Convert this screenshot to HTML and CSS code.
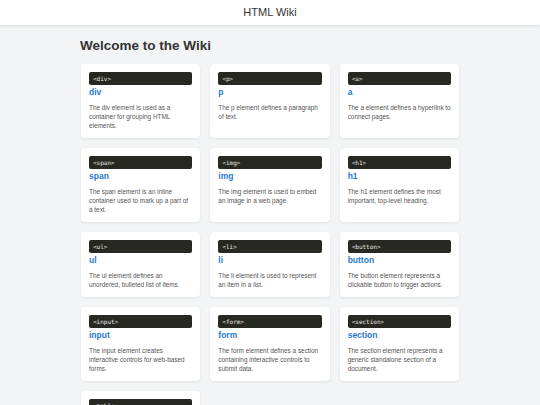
FILE: index.html
```html
<!DOCTYPE html>
<html lang="en">
<head>
  <meta charset="UTF-8">
  <meta name="viewport" content="width=device-width, initial-scale=1.0">
  <title>HTML Wiki</title>
  <link rel="stylesheet" href="styles.css">
</head>
<body>
  <header class="topbar">HTML Wiki</header>

  <main class="wiki">
    <h1>Welcome to the Wiki</h1>

    <div class="cards">
      <div class="card">
        <code class="tag">&lt;div&gt;</code>
        <h2>div</h2>
        <p>The div element is used as a container for grouping HTML elements.</p>
      </div>
      <div class="card">
        <code class="tag">&lt;p&gt;</code>
        <h2>p</h2>
        <p>The p element defines a paragraph of text.</p>
      </div>
      <div class="card">
        <code class="tag">&lt;a&gt;</code>
        <h2>a</h2>
        <p>The a element defines a hyperlink to connect pages.</p>
      </div>
      <div class="card">
        <code class="tag">&lt;span&gt;</code>
        <h2>span</h2>
        <p>The span element is an inline container used to mark up a part of a text.</p>
      </div>
      <div class="card">
        <code class="tag">&lt;img&gt;</code>
        <h2>img</h2>
        <p>The img element is used to embed an image in a web page.</p>
      </div>
      <div class="card">
        <code class="tag">&lt;h1&gt;</code>
        <h2>h1</h2>
        <p>The h1 element defines the most important, top-level heading.</p>
      </div>
      <div class="card">
        <code class="tag">&lt;ul&gt;</code>
        <h2>ul</h2>
        <p>The ul element defines an unordered, bulleted list of items.</p>
      </div>
      <div class="card">
        <code class="tag">&lt;li&gt;</code>
        <h2>li</h2>
        <p>The li element is used to represent an item in a list.</p>
      </div>
      <div class="card">
        <code class="tag">&lt;button&gt;</code>
        <h2>button</h2>
        <p>The button element represents a clickable button to trigger actions.</p>
      </div>
      <div class="card">
        <code class="tag">&lt;input&gt;</code>
        <h2>input</h2>
        <p>The input element creates interactive controls for web-based forms.</p>
      </div>
      <div class="card">
        <code class="tag">&lt;form&gt;</code>
        <h2>form</h2>
        <p>The form element defines a section containing interactive controls to submit data.</p>
      </div>
      <div class="card">
        <code class="tag">&lt;section&gt;</code>
        <h2>section</h2>
        <p>The section element represents a generic standalone section of a document.</p>
      </div>
      <div class="card">
        <code class="tag">&lt;table&gt;</code>
        <h2>table</h2>
        <p>The table element represents data arranged in rows and columns.</p>
      </div>
    </div>
  </main>
</body>
</html>
```

FILE: styles.css
```css
body {
  margin: 0;
  background-color: #f3f4f6;
  color: #333;
  font-family: "Liberation Sans", Arial, sans-serif;
}
.topbar {
  height: 25px;
  line-height: 25px;
  background-color: #fff;
  text-align: center;
  font-size: 11px;
  color: #333;
  box-shadow: 0 1px 3px rgba(0, 0, 0, 0.1);
}
.wiki {
  max-width: 378px;
  margin: 0 auto;
  padding: 12px 0;
}
.wiki h1 {
  margin: 0 0 10px -1px;
  font-size: 13.5px;
  line-height: 17px;
  color: #333;
}
.cards {
  display: grid;
  grid-template-columns: repeat(3, 1fr);
  gap: 10px;
}
.card {
  background-color: #fff;
  border-radius: 4px;
  padding: 8px;
  box-shadow: 0 1px 3px rgba(0, 0, 0, 0.08);
}
.tag {
  display: block;
  height: 13px;
  line-height: 13px;
  padding: 0 4px;
  background-color: #272822;
  color: #e8e8e0;
  border-radius: 2px;
  font-family: "DejaVu Sans Mono", monospace;
  font-size: 6px;
}
.card h2 {
  margin: 2px 0 0;
  font-size: 8.5px;
  line-height: 11px;
  color: #1f78d1;
}
.card p {
  margin: 5px 0 0;
  font-size: 6.4px;
  line-height: 9px;
  color: #555;
}
```
